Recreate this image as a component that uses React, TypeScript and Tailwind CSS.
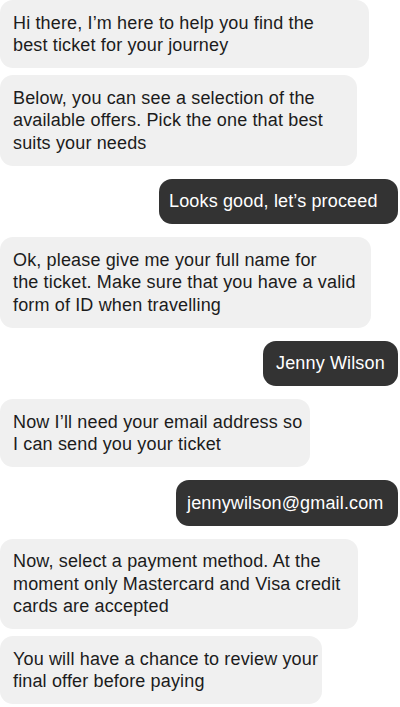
const font = { fontFamily: '"Liberation Sans", Arial, sans-serif' };

type Msg = {
  from: "bot" | "me";
  lines: string[];
  w: string;
  pl?: string;
};

const messages: Msg[] = [
  { from: "bot", lines: ["Hi there, I’m here to help you find the", "best ticket for your journey"], w: "w-[369px]" },
  {
    from: "bot",
    lines: ["Below, you can see a selection of the", "available offers. Pick the one that best", "suits your needs"],
    w: "w-[357px]",
  },
  { from: "me", lines: ["Looks good, let’s proceed"], w: "w-[239px]", pl: "pl-[10px]" },
  {
    from: "bot",
    lines: ["Ok, please give me your full name for", "the ticket. Make sure that you have a valid", "form of ID when travelling"],
    w: "w-[371px]",
  },
  { from: "me", lines: ["Jenny Wilson"], w: "w-[135px]", pl: "pl-[13px]" },
  { from: "bot", lines: ["Now I’ll need your email address so", "I can send you your ticket"], w: "w-[310px]" },
  { from: "me", lines: ["jennywilson@gmail.com"], w: "w-[222px]", pl: "pl-[11px]" },
  {
    from: "bot",
    lines: ["Now, select a payment method. At the", "moment only Mastercard and Visa credit", "cards are accepted"],
    w: "w-[358px]",
  },
  { from: "bot", lines: ["You will have a chance to review your", "final offer before paying"], w: "w-[322px]" },
];

function Bubble({ msg }: { msg: Msg }) {
  const isMe = msg.from === "me";
  return (
    <div
      className={
        isMe
          ? `self-end ${msg.w} ${msg.pl} rounded-[13px] bg-[#333333] py-[11.5px] text-white`
          : `self-start ${msg.w} rounded-[13px] bg-[#f0f0f0] py-[11.5px] pl-[13px] text-[#1c1c1c]`
      }
    >
      {msg.lines.map((l, i) => (
        <div key={i} className="whitespace-nowrap">
          {l}
        </div>
      ))}
    </div>
  );
}

export default function App() {
  return (
    <div
      className="flex h-[707px] w-[400px] flex-col overflow-hidden bg-white pr-[2px] text-[18px] leading-[22.5px] tracking-[0.15px]"
      style={font}
    >
      {messages.map((m, i) => {
        const prev = messages[i - 1];
        const gap = !prev ? "" : prev.from === m.from ? "mt-[7px]" : "mt-[13px]";
        return (
          <div key={i} className={`flex flex-col ${gap}`}>
            <Bubble msg={m} />
          </div>
        );
      })}
    </div>
  );
}
